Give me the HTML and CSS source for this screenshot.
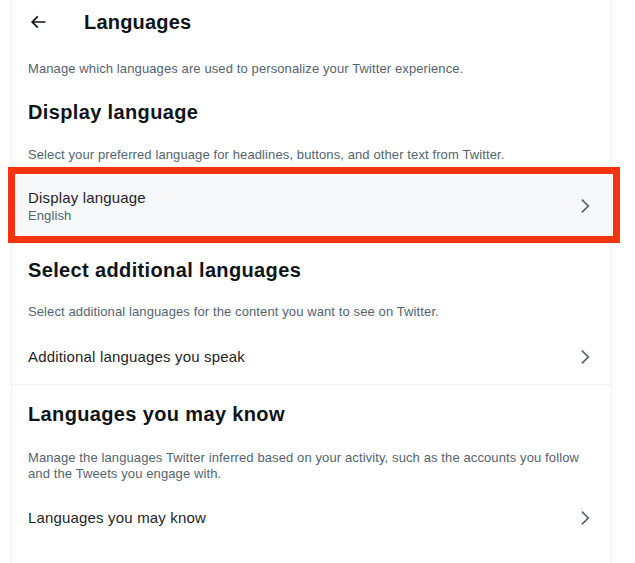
FILE: index.html
```html
<!DOCTYPE html>
<html lang="en">
<head>
<meta charset="utf-8">
<title>Languages</title>
<link rel="stylesheet" href="styles.css">
</head>
<body>
<div class="column">
  <header class="header">
    <svg class="back" viewBox="0 0 24 24" aria-hidden="true"><path d="M7.414 13l5.043 5.04-1.414 1.42L3.586 12l7.457-7.46 1.414 1.42L7.414 11H21v2H7.414z"/></svg>
    <h1 class="title">Languages</h1>
  </header>
  <p class="desc intro">Manage which languages are used to personalize your Twitter experience.</p>

  <h2 class="heading h-display">Display language</h2>
  <p class="desc d-display">Select your preferred language for headlines, buttons, and other text from Twitter.</p>
  <div class="highlight">
    <div class="row row-hover">
      <div class="row-text">
        <span class="row-label">Display language</span>
        <span class="row-sub">English</span>
      </div>
      <svg class="chev" viewBox="0 0 24 24" aria-hidden="true"><path d="M14.586 12L7.543 4.96l1.414-1.42L17.414 12l-8.457 8.46-1.414-1.42L14.586 12z"/></svg>
    </div>
  </div>

  <h2 class="heading h-additional">Select additional languages</h2>
  <p class="desc d-additional">Select additional languages for the content you want to see on Twitter.</p>
  <div class="row row-single row-sep">
    <span class="row-label">Additional languages you speak</span>
    <svg class="chev" viewBox="0 0 24 24" aria-hidden="true"><path d="M14.586 12L7.543 4.96l1.414-1.42L17.414 12l-8.457 8.46-1.414-1.42L14.586 12z"/></svg>
  </div>

  <h2 class="heading h-know">Languages you may know</h2>
  <p class="desc d-know">Manage the languages Twitter inferred based on your activity, such as the accounts you follow and the Tweets you engage with.</p>
  <div class="row row-single row-last">
    <span class="row-label">Languages you may know</span>
    <svg class="chev" viewBox="0 0 24 24" aria-hidden="true"><path d="M14.586 12L7.543 4.96l1.414-1.42L17.414 12l-8.457 8.46-1.414-1.42L14.586 12z"/></svg>
  </div>
</div>
</body>
</html>
```

FILE: styles.css
```css
html, body {
  margin: 0;
  padding: 0;
  background: #ffffff;
}
body {
  font-family: "Liberation Sans", Arial, sans-serif;
  color: #0f1419;
  height: 563px;
  overflow: hidden;
}
.column {
  margin-left: 11px;
  width: 599px;
  min-height: 563px;
  border-left: 1px solid #eff1f2;
  border-right: 1px solid #eff1f2;
  display: flex;
  flex-direction: column;
}
.header {
  height: 44px;
  display: flex;
  align-items: center;
  padding: 0 16px;
}
.back {
  width: 20px;
  height: 20px;
  fill: #0f1419;
  margin-right: 36px;
}
.title {
  margin: 0;
  font-size: 20px;
  line-height: 24px;
  font-weight: 700;
  letter-spacing: 0.2px;
}
.desc {
  margin: 0;
  padding: 0 16px;
  font-size: 13px;
  line-height: 16px;
  color: #536471;
  letter-spacing: 0.11px;
}
.intro { margin-top: 17px; }
.heading {
  margin: 0;
  padding: 0 16px;
  font-size: 20px;
  line-height: 24px;
  font-weight: 700;
  letter-spacing: 0.36px;
}
.h-display { margin-top: 23px; }
.d-display { margin-top: 23px; }
.highlight {
  position: relative;
  margin-top: 13px;
}
.highlight::after {
  content: "";
  position: absolute;
  left: -4px;
  right: -9px;
  top: -9px;
  bottom: -7px;
  border: 7px solid #f4330f;
  pointer-events: none;
}
.row {
  display: flex;
  align-items: center;
  justify-content: space-between;
  padding: 12px 16px;
}
.row-hover { background: #f6f8f9; }
.row-text {
  display: flex;
  flex-direction: column;
}
.row-label {
  font-size: 15px;
  line-height: 20px;
  color: #1f2429;
  letter-spacing: 0.17px;
}
.row-sub {
  font-size: 13px;
  line-height: 16px;
  color: #536471;
  letter-spacing: 0.1px;
}
.chev {
  width: 20px;
  height: 20px;
  fill: #536471;
  flex-shrink: 0;
}
.h-additional { margin-top: 22px; }
.d-additional { margin-top: 22px; }
.row-single { padding: 16px 16px 17px; }
.row-sep {
  margin-top: 11px;
  border-bottom: 1px solid #eff3f4;
}
.h-know { margin-top: 17px; }
.d-know { margin-top: 24px; padding-right: 16px; }
.row-last { margin-top: 10px; }
```
